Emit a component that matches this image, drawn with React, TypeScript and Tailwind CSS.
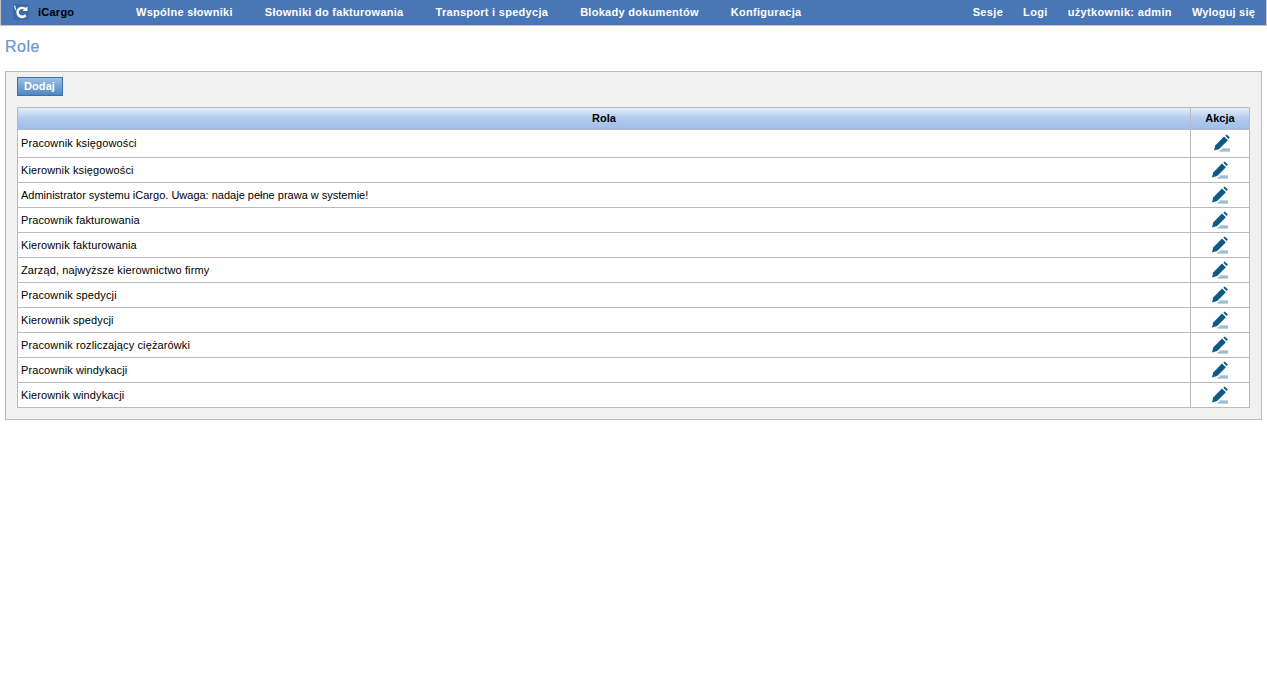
const menuLeft = ["Wspólne słowniki", "Słowniki do fakturowania", "Transport i spedycja", "Blokady dokumentów", "Konfiguracja"];
const menuRight = ["Sesje", "Logi", "użytkownik: admin", "Wyloguj się"];

const roles = [
  "Pracownik księgowości",
  "Kierownik księgowości",
  "Administrator systemu iCargo. Uwaga: nadaje pełne prawa w systemie!",
  "Pracownik fakturowania",
  "Kierownik fakturowania",
  "Zarząd, najwyższe kierownictwo firmy",
  "Pracownik spedycji",
  "Kierownik spedycji",
  "Pracownik rozliczający ciężarówki",
  "Pracownik windykacji",
  "Kierownik windykacji",
];

function Logo() {
  return (
    <svg viewBox="0 0 16 16" className="h-4 w-4 bg-[#3a6ba6]" aria-hidden="true">
      <path d="M1.500 1.500l1.200 4.500" fill="none" stroke="#dfe9f5" strokeWidth="1.200" />
      <path d="M12.800 5.500C11 3.700 8 3.400 6 5 3.900 6.800 4.100 10.300 6.300 11.900c2 1.300 4.600 1.100 6.500-.6" fill="none" stroke="#f4f7fb" strokeWidth="2.600" />
      <path d="M9.500 7h5V2.200z" fill="#f4f7fb" />
    </svg>
  );
}

function EditIcon() {
  return (
    <svg viewBox="0 0 18 18" className="h-[18px] w-[18px]" aria-hidden="true">
      <path d="M1 16.500l1.200-5.100L11 2.600l3.900 3.600L6.200 15z" fill="#0f5a85" />
      <path d="M12.300 1.800l1.400-1.300 3.200 3.100-1.300 1.400z" fill="#0f5a85" />
      <path d="M8.500 14.500h8.500v1.200H8.500zM6.500 16.200H17v1.300H6.500z" fill="#7fa9c2" />
    </svg>
  );
}

export default function App() {
  return (
    <div className="min-h-[681px] bg-white font-['Liberation_Sans',Arial,sans-serif] text-[11px] text-black">
      <nav className="flex h-[26px] items-center border border-t-0 border-[#c5c5c5] bg-[#4a76b6] pb-[1px] font-bold text-white">
        <div className="flex w-[135px] items-center pl-[12px]">
          <Logo />
          <span className="ml-[9px] tracking-[0.25px] text-black">iCargo</span>
        </div>
        <ul className="flex gap-[32px] tracking-[0.28px]">
          {menuLeft.map((item) => (
            <li key={item}>{item}</li>
          ))}
        </ul>
        <ul className="ml-auto flex gap-[20px] pr-[11px] tracking-[0.34px]">
          {menuRight.map((item) => (
            <li key={item} className="last:tracking-[0.2px]">{item}</li>
          ))}
        </ul>
      </nav>

      <h1 className="ml-[5px] mt-[11px] text-[16px] leading-[20px] tracking-[0.5px] text-[#6b93d0] [-webkit-text-stroke:0.2px_#6b93d0]">Role</h1>

      <div className="mx-[5px] mt-[14px] border border-[#bbbbbb] bg-[#f1f1f1] px-[11px] pb-[11px] pt-[5px]">
        <button className="block h-[19px] w-[46px] border border-[#3d6fa8] bg-gradient-to-b from-[#9cc0e4] to-[#4f86c0] pr-[1px] font-bold tracking-[0.1px] text-white">
          Dodaj
        </button>

        <table className="mt-[11px] w-full table-fixed border-collapse bg-white">
          <thead>
            <tr className="h-[22px] bg-gradient-to-b from-[#e6edf7] via-[#b4ccee] via-45% to-[#9cbce9]">
              <th className="border border-[#bbbbbb] font-bold">Rola</th>
              <th className="w-[59px] border border-[#bbbbbb] font-bold">Akcja</th>
            </tr>
          </thead>
          <tbody>
            {roles.map((role, i) => (
              <tr key={role} className={i === 0 ? "h-[28px]" : "h-[25px]"}>
                <td className={i === 2 ? "border border-[#bbbbbb] pl-[3px]" : "border border-[#bbbbbb] pl-[3px] tracking-[0.12px]"}>{role}</td>
                <td className="border border-[#bbbbbb]">
                  <div className={i === 0 ? "flex justify-center pl-[3px] pb-[1px]" : "flex justify-center"}>
                    <EditIcon />
                  </div>
                </td>
              </tr>
            ))}
          </tbody>
        </table>
      </div>
    </div>
  );
}
